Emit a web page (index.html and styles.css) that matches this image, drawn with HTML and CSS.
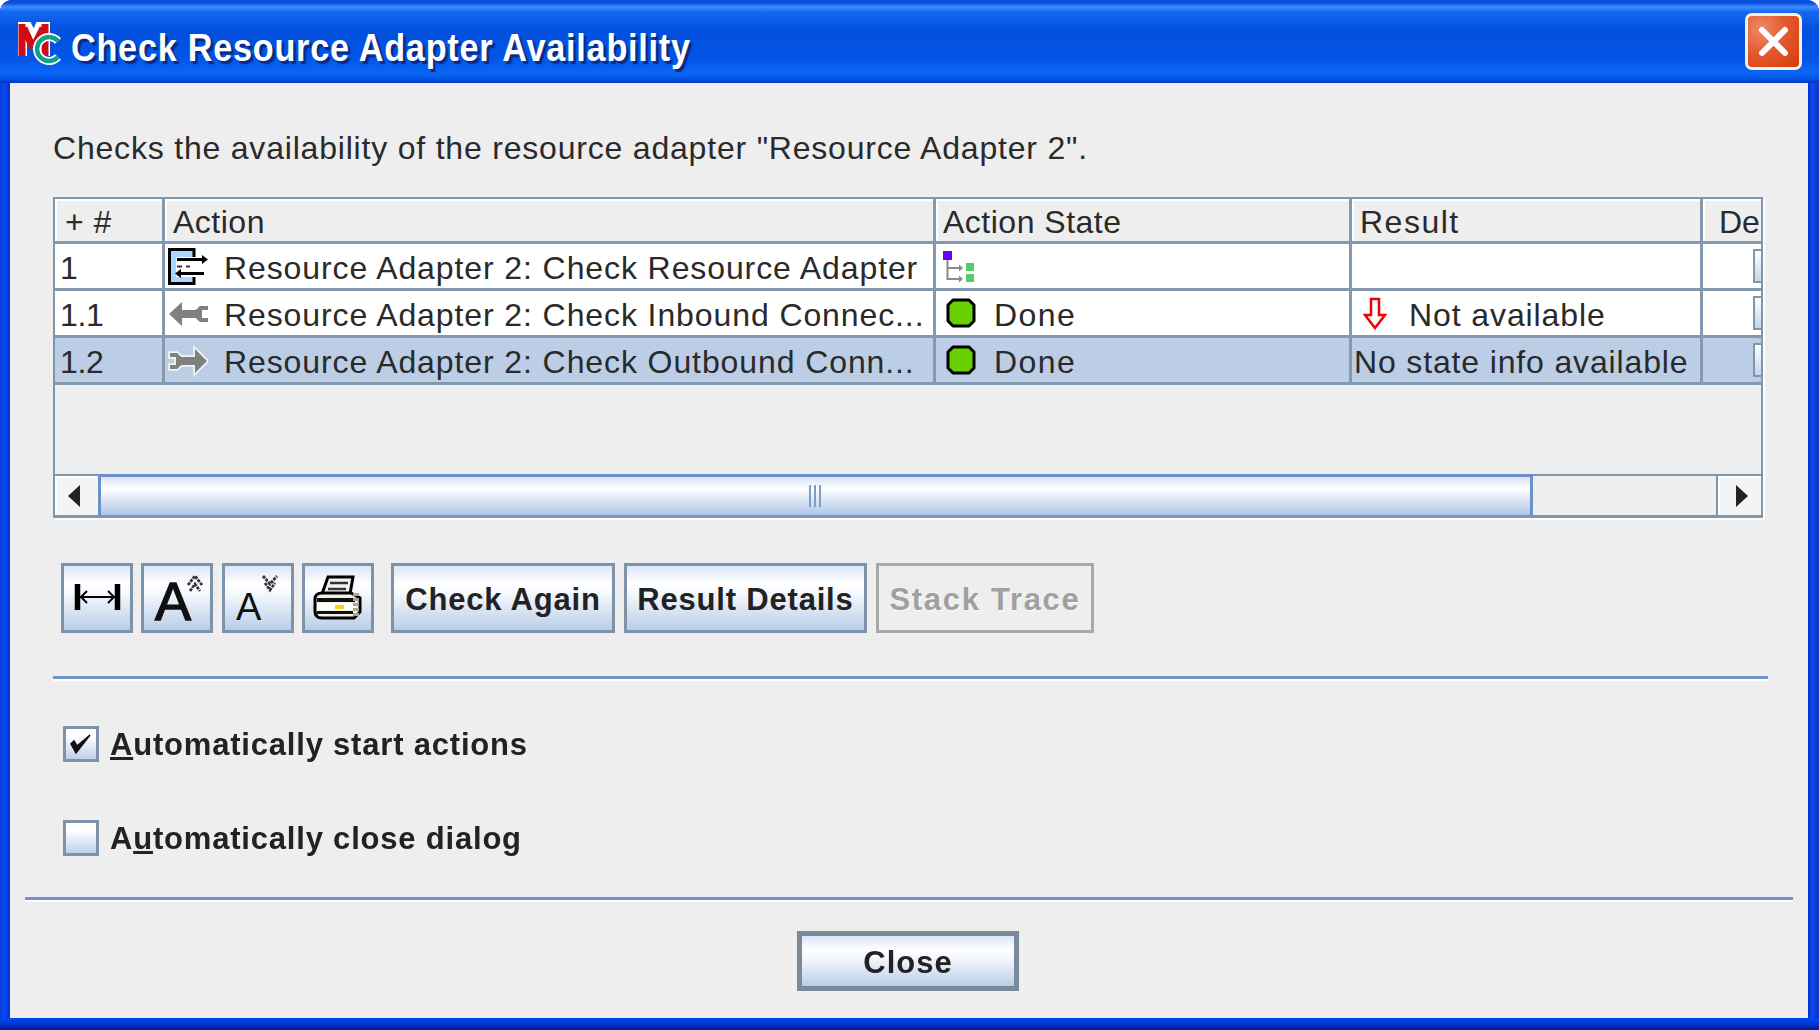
FILE: index.html
```html
<!DOCTYPE html>
<html lang="en">
<head>
  <meta charset="UTF-8" />
  <title>Check Resource Adapter Availability</title>
  <link rel="stylesheet" href="styles.css">
</head>
<body>

<div class="window">

  <!-- TITLE BAR -->
  <div class="titlebar">
    <svg class="logo" width="46" height="46" viewBox="0 0 46 46">
      <path d="M4 34 V2 H8 L16 18 L23 2 H27 V34" fill="none" stroke="#fff" stroke-width="10"/>
      <path d="M4 34 V2 M6 6 L15 26 M25 6 L15 26 M27 2 V34" fill="none" stroke="#d00c14" stroke-width="7"/>
      <path d="M40 19 A12 12 0 1 0 40 35" fill="none" stroke="#fff" stroke-width="8"/>
      <path d="M40 19 A12 12 0 1 0 40 35" fill="none" stroke="#10a08c" stroke-width="4.500"/>
    </svg>
    <span class="title-text">Check Resource Adapter Availability</span>
    <div class="close-x">
      <svg width="51" height="51" viewBox="0 0 51 51">
        <path d="M14 14 L37 37 M37 14 L14 37" stroke="#fff" stroke-width="6" stroke-linecap="round"/>
      </svg>
    </div>
  </div>

  <div class="client">

    <div class="main">
      <p class="intro">Checks the availability of the resource adapter "Resource Adapter 2".</p>

      <!-- ACTION TABLE -->
      <div class="table-pane">
        <div class="table-wrap">
          <table class="actions">
            <colgroup>
              <col class="c-num"><col class="c-action"><col class="c-state"><col class="c-result"><col class="c-det">
            </colgroup>
            <thead>
              <tr>
                <th class="h-num">+ #</th>
                <th>Action</th>
                <th class="h-state">Action State</th>
                <th class="h-result">Result</th>
                <th class="h-det">De</th>
              </tr>
            </thead>
            <tbody>
              <tr>
                <td class="num">1</td>
                <td class="act">
                  <div class="cell">
                    <svg class="ic" width="40" height="38" viewBox="0 0 40 38">
                      <rect x="2" y="2" width="23" height="33" fill="#a9d5ff"/>
                      <rect x="8" y="9" width="32" height="20" fill="#fff"/>
                      <path d="M26 9 V1.500 H1.500 V35.500 H26 V29" fill="none" stroke="#000" stroke-width="3"/>
                      <path d="M9 11.500 H36 M12 25.500 H36" stroke="#000" stroke-width="3"/>
                      <path d="M9 18.500 H14 M18 18.500 H22" stroke="#333" stroke-width="2"/>
                      <path d="M34 7 L40 11.500 L34 16 Z M13 21 L7 25.500 L13 30 Z" fill="#000"/>
                    </svg>
                    <span>Resource Adapter 2: Check Resource Adapter</span>
                  </div>
                </td>
                <td class="state">
                  <svg class="tree" width="34" height="34" viewBox="0 0 34 34">
                    <rect x="0" y="0" width="9" height="9" fill="#6a00ff"/>
                    <path d="M4.500 9 V28 H18 M4.500 17 H18" fill="none" stroke="#8a8a8a" stroke-width="2"/>
                    <path d="M16 13.500 L20 17 L16 20.500 Z M16 24.500 L20 28 L16 31.500 Z" fill="#8a8a8a"/>
                    <rect x="23" y="12" width="8" height="8" fill="#55cc66"/>
                    <rect x="23" y="23" width="8" height="8" fill="#55cc66"/>
                  </svg>
                </td>
                <td></td>
                <td><div class="det-btn"></div></td>
              </tr>
              <tr>
                <td class="num">1.1</td>
                <td class="act">
                  <div class="cell">
                    <svg class="ic" width="40" height="38" viewBox="0 0 40 38">
                      <path d="M1 19 L14 7 V15 H27 C29 15 30 12 32 11 H40 V15 H34 V23 H40 V27 H32 C30 26 29 23 27 23 H14 V31 Z" fill="#808080"/>
                    </svg>
                    <span>Resource Adapter 2: Check Inbound Connec...</span>
                  </div>
                </td>
                <td class="state">
                  <div class="cell">
                    <svg class="done" width="30" height="30" viewBox="0 0 30 30">
                      <path d="M7 2 H23 L28 7 V23 L23 28 H7 L2 23 V7 Z" fill="#66d000" stroke="#000" stroke-width="3" stroke-linejoin="round"/>
                    </svg>
                    <span class="done-text">Done</span>
                  </div>
                </td>
                <td class="result">
                  <div class="cell">
                    <svg class="down" width="24" height="34" viewBox="0 0 24 34">
                      <path d="M8 2 H16 V18 H22 L12 31 L2 18 H8 Z" fill="#fff" stroke="#f00000" stroke-width="2.500"/>
                    </svg>
                    <span>Not available</span>
                  </div>
                </td>
                <td><div class="det-btn"></div></td>
              </tr>
              <tr class="selected">
                <td class="num">1.2</td>
                <td class="act">
                  <div class="cell">
                    <svg class="ic" width="40" height="38" viewBox="0 0 40 38">
                      <path d="M2 11 H9 C11 12 12 15 14 15 H27 V7 L39 19 L27 31 V23 H14 C12 23 11 26 9 27 H2 V23 H8 V15 H2 Z" fill="#808080" stroke="#f4f4f0" stroke-width="3.500" paint-order="stroke"/>
                    </svg>
                    <span>Resource Adapter 2: Check Outbound Conn...</span>
                  </div>
                </td>
                <td class="state">
                  <div class="cell">
                    <svg class="done" width="30" height="30" viewBox="0 0 30 30">
                      <path d="M7 2 H23 L28 7 V23 L23 28 H7 L2 23 V7 Z" fill="#66d000" stroke="#000" stroke-width="3" stroke-linejoin="round"/>
                    </svg>
                    <span class="done-text">Done</span>
                  </div>
                </td>
                <td class="no-info"><div class="cell">No state info available</div></td>
                <td><div class="det-btn"></div></td>
              </tr>
            </tbody>
          </table>
        </div>

        <!-- HORIZONTAL SCROLLBAR -->
        <div class="scrollbar">
          <div class="sb-arrow sb-left"><span class="tri-left"></span></div>
          <div class="sb-thumb"><span class="grip"></span></div>
          <div class="sb-track"></div>
          <div class="sb-arrow sb-right"><span class="tri-right"></span></div>
        </div>
      </div>

      <!-- TOOL BUTTONS -->
      <div class="toolbar">
        <div class="btn icon-btn">
          <svg width="66" height="64" viewBox="0 0 66 64">
            <path d="M13.500 18 V44 M53.500 18 V44" stroke="#000" stroke-width="5.500"/>
            <path d="M16 31 H51" stroke="#000" stroke-width="1.800"/>
            <path d="M23 25 L17 31 L23 37 M44 25 L50 31 L44 37" fill="none" stroke="#000" stroke-width="2"/>
          </svg>
        </div>
        <div class="btn icon-btn">
          <svg width="66" height="64" viewBox="0 0 66 64">
            <text class="big-a" x="11" y="54">A</text>
            <path d="M44 19 L51 10 L58 19 M46 25 L51 18 L56 25" fill="none" stroke="#333" stroke-width="2.800" stroke-dasharray="3 1"/>
          </svg>
        </div>
        <div class="btn icon-btn">
          <svg width="66" height="64" viewBox="0 0 66 64">
            <text class="small-a" x="11" y="54">A</text>
            <path d="M38 10 L45 18 L52 10 M40 17 L45 24 L50 17" fill="none" stroke="#333" stroke-width="2.800" stroke-dasharray="3 1"/>
          </svg>
        </div>
        <div class="btn icon-btn">
          <svg width="66" height="64" viewBox="0 0 66 64">
            <path d="M17 28 L23 11 H48 L45 28 Z" fill="#f4f4f4" stroke="#000" stroke-width="3"/>
            <path d="M25 17 H43 M23 23 H41" stroke="#333" stroke-width="2.500"/>
            <path d="M10 33 C10 29 13 27 17 27 H46 L55 32 V46 L49 52 H17 C12 52 10 49 10 45 Z" fill="#f0f0e6" stroke="#000" stroke-width="3"/>
            <rect x="12" y="32" width="38" height="4" fill="#111"/>
            <rect x="12" y="37" width="38" height="7" fill="#fff"/>
            <rect x="30" y="39" width="9" height="4" fill="#f2dc00"/>
            <path d="M12 46.500 H48" stroke="#111" stroke-width="3"/>
            <path d="M51 27 V50" stroke="#a8a890" stroke-width="6" stroke-dasharray="3 2"/>
          </svg>
        </div>
        <div class="btn text-btn check-again">Check Again</div>
        <div class="btn text-btn result-details">Result Details</div>
        <div class="btn text-btn disabled">Stack Trace</div>
      </div>

      <div class="sep sep-top"></div>

      <!-- OPTIONS -->
      <div class="option">
        <div class="checkbox">
          <svg width="30" height="30" viewBox="0 0 30 30">
            <path d="M5 15 L10 24 L24 6 L11 17 L8 12 Z" fill="#111" stroke="#111" stroke-width="1.500"/>
          </svg>
        </div>
        <span class="opt-label"><u>A</u>utomatically start actions</span>
      </div>
      <div class="option option-2">
        <div class="checkbox"></div>
        <span class="opt-label">A<u>u</u>tomatically close dialog</span>
      </div>
    </div>

    <div class="sep sep-bottom"></div>

    <div class="footer">
      <div class="btn close-btn">Close</div>
    </div>
  </div>

  <div class="bottom-edge"></div>
</div>

</body>
</html>
```

FILE: styles.css
```css
/* ------------------------------
   GENERAL
-------------------------------*/
html, body {
  margin: 0;
  padding: 0;
  background: #fff;
  overflow: hidden;
}
body {
  font-family: "Liberation Sans", Arial, sans-serif;
  color: #2a2a2a;
}

.window {
  width: 1819px;
  height: 1030px;
  display: flex;
  flex-direction: column;
  border-radius: 12px 12px 0 0;
  background: linear-gradient(90deg, #0a3bd8 0, #0a4cf0 4px, #0430d0 10px, #0430d0 1808px, #0a4cf0 1812px, #0a30c0 1819px);
  filter: blur(0.6px);
}

/* ---------------
   TITLE BAR
   ---------------*/
.titlebar {
  height: 83px;
  flex: none;
  display: flex;
  align-items: center;
  padding: 0 17px 0 18px;
  box-sizing: border-box;
  border-radius: 12px 12px 0 0;
  background: linear-gradient(180deg, #0a4fdc 0, #0a50e0 3px, #3d8dff 7px, #1468f0 12px, #0250dc 30px, #0255e6 58px, #0a66f6 72px, #0459ea 78px, #0238c0 83px);
}
.logo {
  flex: none;
  margin-right: 7px;
  margin-top: 6px;
}
.title-text {
  flex: 1;
  color: #fff;
  font-size: 38px;
  font-weight: bold;
  letter-spacing: 0.85px;
  padding-top: 13px;
  text-shadow: 3px 3px 1px #0a2a8c;
  transform: scaleX(0.9);
  transform-origin: left center;
  white-space: nowrap;
}
.close-x {
  width: 57px;
  height: 57px;
  box-sizing: border-box;
  flex: none;
  display: flex;
  align-items: center;
  justify-content: center;
  border: 3px solid #f4f0e8;
  border-radius: 7px;
  background: radial-gradient(circle at 25% 25%, #ec8a68 0, #e2562c 50%, #d83c08 100%);
}

/* ---------------
   CLIENT AREA
   ---------------*/
.client {
  flex: 1;
  margin: 0 11px 0 10px;
  background: #eeeeee;
  display: flex;
  flex-direction: column;
}
.bottom-edge {
  height: 12px;
  flex: none;
  background: linear-gradient(180deg, #0048f0 0, #0038d8 40%, #001a90 100%);
}
.main {
  padding: 0 41px 0 43px;
}
.intro {
  margin: 0;
  height: 114px;
  box-sizing: border-box;
  padding-top: 45px;
  font-size: 32px;
  letter-spacing: 0.8px;
  line-height: 40px;
  white-space: nowrap;
}

/* ---------------
   TABLE
   ---------------*/
.table-pane {
  width: 1710px;
  height: 321px;
  box-sizing: border-box;
  border: 2px solid #8196ab;
  border-bottom: 0;
  display: flex;
  flex-direction: column;
  box-shadow: 2px 2px 0 #fff;
}
.table-wrap {
  flex: 1;
  overflow: hidden;
}
.actions {
  table-layout: fixed;
  border-collapse: separate;
  border-spacing: 0;
  width: 1769px;
  font-size: 32px;
}
.c-num { width: 110px; }
.c-action { width: 771px; }
.c-state { width: 416px; }
.c-result { width: 351px; }
.c-det { width: 121px; }

.actions th,
.actions td {
  box-sizing: border-box;
  border-right: 3px solid #8599ae;
  border-bottom: 3px solid #8599ae;
  white-space: nowrap;
  overflow: hidden;
  font-weight: normal;
  text-align: left;
}
.actions th {
  height: 45px;
  padding: 3px 0 0 8px;
  background: #eeeeee;
  box-shadow: inset 2px 2px 0 #fff;
  line-height: 38px;
  letter-spacing: 0.5px;
}
.actions .h-num { padding-left: 10px; }
.actions .h-state { padding-left: 7px; }
.actions .h-result { padding-left: 8px; letter-spacing: 1.5px; }
.actions .h-det { padding-left: 16px; letter-spacing: 0; }
.actions td {
  height: 47px;
  padding: 0;
  background: #fff;
  line-height: 38px;
  letter-spacing: 0.9px;
}
.actions tbody tr:first-child td { height: 46px; }
.actions .selected td { background: #bbcee6; }

.actions .num { padding: 4px 0 0 5px; letter-spacing: -0.4px; }
.actions .act { padding-left: 3px; }
.actions .state { padding-left: 10px; }
.actions .result { padding-left: 11px; }
.actions .no-info { padding-left: 2px; letter-spacing: 0.85px; }

.cell {
  display: flex;
  align-items: center;
  height: 44px;
  box-sizing: border-box;
  padding-top: 4px;
}
.ic { flex: none; margin-right: 16px; margin-top: -2px; }
.done { flex: none; margin-right: 18px; margin-top: -4px; }
.done-text { letter-spacing: 1.4px; }
.down { flex: none; margin-right: 22px; margin-top: -2px; }
.tree { display: block; margin-top: 3px; margin-left: -3px; }

.det-btn {
  width: 10px;
  height: 34px;
  margin-left: 50px;
  box-sizing: border-box;
  border: 2px solid #8196ab;
  background: linear-gradient(180deg, #fff, #c3d5ec);
}

/* ---------------
   SCROLLBAR
   ---------------*/
.scrollbar {
  flex: none;
  height: 44px;
  box-sizing: border-box;
  display: flex;
  background: #eeeeee;
  border-top: 2px solid #8196ab;
  border-bottom: 3px solid #8196ab;
}
.sb-arrow {
  width: 43px;
  flex: none;
  display: flex;
  align-items: center;
  justify-content: center;
  background: #f4f4f4;
  box-shadow: inset 2px 2px 0 #fff;
}
.sb-left { padding-right: 6px; box-sizing: border-box; }
.sb-right {
  width: 45px;
  border-left: 2px solid #8196ab;
  box-sizing: border-box;
  padding-left: 4px;
}
.tri-left {
  border-top: 11px solid transparent;
  border-bottom: 11px solid transparent;
  border-right: 12px solid #222;
}
.tri-right {
  border-top: 11px solid transparent;
  border-bottom: 11px solid transparent;
  border-left: 12px solid #222;
}
.sb-thumb {
  width: 1435px;
  flex: none;
  box-sizing: border-box;
  margin-top: -2px;
  margin-bottom: -3px;
  border-top: 3px solid #6c90c8;
  border-left: 3px solid #6c90c8;
  border-right: 3px solid #6c90c8;
  border-bottom: 3px solid #7f9ab8;
  background: linear-gradient(180deg, #d4e1f5 0, #ffffff 30%, #eef3fb 45%, #aec6e6 100%);
  display: flex;
  align-items: center;
  justify-content: center;
}
.grip {
  width: 14px;
  height: 22px;
  background: repeating-linear-gradient(90deg, #7d9cca 0, #7d9cca 2px, transparent 2px, transparent 5px);
}
.sb-track { flex: 1; }

/* ---------------
   BUTTONS
   ---------------*/
.btn {
  box-sizing: border-box;
  flex: none;
  border: 3px solid #7f93a8;
  background: linear-gradient(180deg, #dbe6f7 0, #ffffff 28%, #f6f9fd 42%, #b9cde8 100%);
  color: #222;
  font-weight: bold;
  display: flex;
  align-items: center;
  justify-content: center;
}
.toolbar {
  display: flex;
  height: 70px;
  margin-top: 45px;
  margin-left: 8px;
}
.icon-btn {
  width: 72px;
  margin-right: 8.400px;
}
.big-a {
  font-family: "Liberation Sans", sans-serif;
  font-size: 54px;
  font-weight: normal;
  fill: #111;
  stroke: #111;
  stroke-width: 1.4px;
}
.small-a {
  font-family: "Liberation Sans", sans-serif;
  font-size: 38px;
  font-weight: normal;
  fill: #111;
}
.text-btn {
  font-size: 31px;
  letter-spacing: 0.8px;
  padding-top: 3px;
}
.check-again { width: 224px; margin-left: 8.400px; margin-right: 9px; }
.result-details { width: 243px; margin-right: 9px; }
.disabled {
  width: 218px;
  border-color: #a8a8a8;
  background: #eeeeee;
  color: #a0a0a0;
  letter-spacing: 1.7px;
  text-shadow: 1px 1px 0 #fafafa;
}

.sep {
  height: 3px;
  background: #6f94c8;
  box-shadow: 0 2px 0 #fff;
}
.sep-top {
  margin-top: 43px;
  margin-right: -1px;
  margin-left: 0;
}

/* ---------------
   OPTIONS
   ---------------*/
.option {
  display: flex;
  align-items: center;
  height: 36px;
  margin-top: 47px;
  margin-left: 10px;
}
.option-2 { margin-top: 58px; }
.checkbox {
  width: 36px;
  height: 36px;
  flex: none;
  box-sizing: border-box;
  border: 3px solid #7f93a8;
  background: linear-gradient(180deg, #fff 0, #fff 25%, #bdd0ea 100%);
  margin-right: 11px;
}
.opt-label {
  font-size: 31px;
  font-weight: bold;
  letter-spacing: 0.8px;
  color: #222;
  white-space: nowrap;
  padding-top: 1px;
}

.sep-bottom {
  margin: 41px 15px 0 15px;
}

/* ---------------
   FOOTER
   ---------------*/
.footer {
  display: flex;
  justify-content: flex-start;
  padding-top: 31px;
  padding-left: 787px;
}
.close-btn {
  width: 222px;
  height: 60px;
  border: 5px solid #7a8a99;
  font-size: 31px;
  letter-spacing: 1px;
  padding-top: 3px;
}
```
